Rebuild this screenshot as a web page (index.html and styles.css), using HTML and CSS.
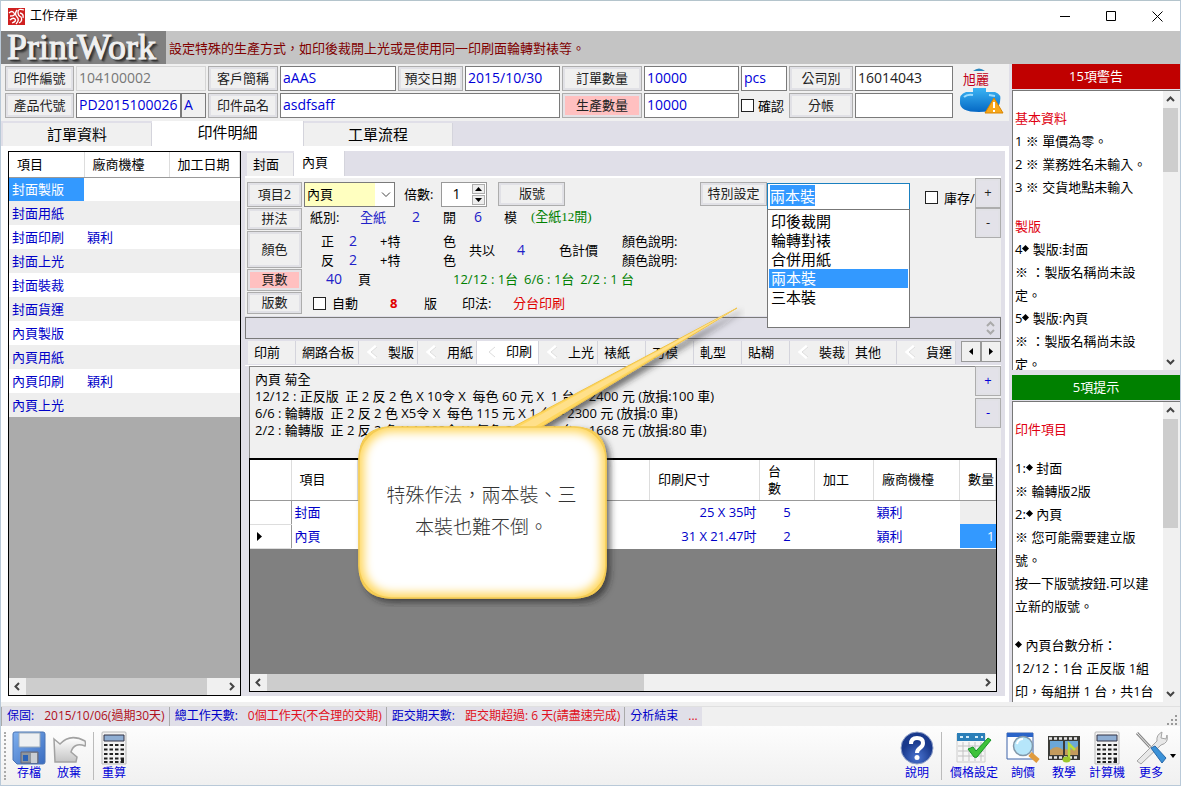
FILE: index.html
```html
<!DOCTYPE html>
<html lang="zh-Hant">
<head>
<meta charset="utf-8">
<meta name="viewport" content="width=device-width, initial-scale=1">
<title>工作存單</title>
<link rel="stylesheet" href="styles.css">
</head>
<body>
<div class="window">
  <header class="titlebar">
    <svg class="app-icon" viewBox="0 0 17 17" aria-hidden="true"><rect width="17" height="17" fill="#cf2020"/><path d="M1 5q3-3 5 0t-4 3M2 12q3-3 5-1t-3 4M16 2q-6-2-6 2t3 5q2 4-2 6M9 2q-3 4 0 7t-1 7M12 5q4 1 3 5" fill="none" stroke="#fff" stroke-width="1.3"/></svg>
    <h1 class="title">工作存單</h1>
    <div class="window-buttons">
      <button aria-label="最小化"><svg viewBox="0 0 11 11"><path d="M0 5.5h10"/></svg></button>
      <button aria-label="最大化"><svg viewBox="0 0 11 11"><path d="M.5.5h9v9h-9z"/></svg></button>
      <button aria-label="關閉"><svg viewBox="0 0 11 11"><path d="M.5.5l10 10M10.500.5l-10 10"/></svg></button>
    </div>
  </header>
  <div class="banner"><div class="logo">PrintWork</div><p class="hint">設定特殊的生產方式，如印後裁開上光或是使用同一印刷面輪轉對裱等。</p></div>

  <main class="main">
    <div class="left">
      <form class="form">
        <button type="button" class="btn">印件編號</button>
        <input class="field muted" aria-label="印件編號" value="104100002">
        <button type="button" class="btn">客戶簡稱</button>
        <input class="field" aria-label="客戶簡稱" value="aAAS">
        <button type="button" class="btn">預交日期</button>
        <input class="field" aria-label="預交日期" value="2015/10/30">
        <button type="button" class="btn">訂單數量</button>
        <input class="field" aria-label="訂單數量" value="10000">
        <input class="field" aria-label="單位" value="pcs">
        <button type="button" class="btn">公司別</button>
        <input class="field dark" aria-label="公司別" value="16014043">
        <div class="customer">
          <span class="customer-name">旭麗</span>
          <svg viewBox="0 0 46 50" aria-hidden="true">
            <defs><linearGradient id="blue" x2="0" y2="1"><stop stop-color="#3bb4f4"/><stop offset="1" stop-color="#0568c4"/></linearGradient></defs>
            <path d="M14 5q6-5 12 0z" fill="#2b87bd"/><path d="M14 22h13v4h9q7 2 5 10-1 10-21 10T1 36q-1-8 6-10h7z" fill="url(#blue)"/><path d="M5 31q3-3 9-2M30 29l6 1" stroke="#9bdcff" stroke-width="2" fill="none"/><path d="M35 32l9 15H26z" fill="#f7a81b" stroke="#d98500"/><path d="M35 36v6M35 44v2" stroke="#fff" stroke-width="2"/>
          </svg>
        </div>
        <button type="button" class="btn">產品代號</button>
        <div class="code"><input class="field" aria-label="產品代號" value="PD2015100026"><input class="field tint" aria-label="版本" value="A"></div>
        <button type="button" class="btn">印件品名</button>
        <input class="field wide" aria-label="印件品名" value="asdfsaff">
        <button type="button" class="btn pink">生產數量</button>
        <input class="field" aria-label="生產數量" value="10000">
        <label class="check"><input type="checkbox">確認</label>
        <button type="button" class="btn">分帳</button>
        <input class="field" aria-label="分帳">
      </form>
      <nav class="tabs">
        <button class="tab">訂單資料</button><button class="tab active">印件明細</button><button class="tab">工單流程</button>
      </nav>
      <div class="body">
        <section class="items">
          <table class="item-table">
            <colgroup><col class="c-name"><col class="c-vendor"><col></colgroup>
            <thead><tr><th>項目</th><th>廠商機檯</th><th>加工日期</th></tr></thead>
            <tbody>
              <tr><td class="selected">封面製版</td><td></td><td></td></tr>
              <tr><td>封面用紙</td><td></td><td></td></tr>
              <tr><td>封面印刷</td><td>穎利</td><td></td></tr>
              <tr><td>封面上光</td><td></td><td></td></tr>
              <tr><td>封面裝裁</td><td></td><td></td></tr>
              <tr><td>封面貨運</td><td></td><td></td></tr>
              <tr><td>內頁製版</td><td></td><td></td></tr>
              <tr><td>內頁用紙</td><td></td><td></td></tr>
              <tr><td>內頁印刷</td><td>穎利</td><td></td></tr>
              <tr><td>內頁上光</td><td></td><td></td></tr>
            </tbody>
          </table>
          <div class="hbar"><button aria-label="向左"><svg viewBox="0 0 9 9"><path d="M6 1L2.500 4.500 6 8"/></svg></button><span class="track"><i class="thumb thumb-items"></i></span><button aria-label="向右"><svg viewBox="0 0 9 9"><path d="M3 1l3.500 3.500L3 8"/></svg></button></div>
        </section>

        <section class="detail">
          <nav class="subtabs"><button class="tab">封面</button><button class="tab active">內頁</button></nav>
          <div class="spec">
            <div class="rows">
              <div class="row r1">
                <button class="btn">項目2</button>
                <div class="pick"><select aria-label="項目"><option>內頁</option></select><svg viewBox="0 0 10 6" aria-hidden="true"><path d="M1 .500l4 4 4-4"/></svg></div>
                <label class="times" for="times">倍數:</label>
                <div class="spin"><input id="times" value="1"><span><button aria-label="增加"><svg viewBox="0 0 7 4"><path d="M3.500 0L7 4H0z"/></svg></button><button aria-label="減少"><svg viewBox="0 0 7 4"><path d="M0 0h7L3.500 4z"/></svg></button></span></div>
                <button class="btn plate">版號</button>
                <button class="btn special">特別設定</button>
                <div class="combo">
                  <input id="special" aria-label="特別設定" value="兩本裝" autofocus>
                  <ul class="options" role="listbox"><li role="option">印後裁開</li><li role="option">輪轉對裱</li><li role="option">合併用紙</li><li role="option" class="on" aria-selected="true">兩本裝</li><li role="option">三本裝</li></ul>
                </div>
                <label class="check stock"><input type="checkbox">庫存/</label>
              </div>
              <div class="row r2"><button class="btn">拼法</button><div class="cells"><span>紙別:</span><b>全紙</b><b class="num">2</b><span>開</span><b class="num">6</b><span>模</span><span class="green serif">(全紙12開)</span></div></div>
              <div class="row r3"><button class="btn">顏色</button><div class="cells"><span>正</span><b class="num">2</b><span>+特</span><span>色</span><span class="two">共以</span><b class="two num">4</b><span class="two">色計價</span><span>顏色說明:</span><span>反</span><b class="num">2</b><span>+特</span><span>色</span><span>顏色說明:</span></div></div>
              <div class="row r4"><button class="btn pink">頁數</button><div class="cells"><b class="num">40</b><span>頁</span><span class="green sizes"><span>12/12 : 1台</span><span>6/6 : 1台</span><span>2/2 : 1 台</span></span></div></div>
              <div class="row r5"><button class="btn">版數</button><div class="cells"><label class="check"><input type="checkbox">自動</label><strong class="red">8</strong><span>版</span><span>印法:</span><span class="red">分台印刷</span></div></div>
            </div>
            <div class="plusminus"><button class="btn" aria-label="新增">+</button><button class="btn" aria-label="移除">-</button></div>
          </div>
          <div class="note"><svg viewBox="0 0 9 14" aria-hidden="true"><path d="M1 5l3.500-3.500L8 5M1 9l3.500 3.500L8 9"/></svg></div>
          <nav class="steps">
            <button class="tab">印前</button><button class="tab wide-tab">網路合板</button><button class="tab mark">製版</button><button class="tab mark">用紙</button><button class="tab mark active">印刷</button><button class="tab mark">上光</button><button class="tab">裱紙</button><button class="tab">刀模</button><button class="tab">軋型</button><button class="tab">貼糊</button><button class="tab mark">裝裁</button><button class="tab">其他</button><button class="tab mark">貨運</button>
            <span class="pager"><button aria-label="上一頁籤"><svg viewBox="0 0 4 7"><path d="M4 0v7L0 3.500z"/></svg></button><button aria-label="下一頁籤"><svg viewBox="0 0 4 7"><path d="M0 0v7l4-3.500z"/></svg></button></span>
          </nav>
          <div class="calc">
            <div class="calc-text">內頁 菊全
12/12 : 正反版  正 2 反 2 色 X 10令 X  每色 60 元 X  1 台 = 2400 元 (放損:100 車)
6/6 : 輪轉版  正 2 反 2 色 X5令 X  每色 115 元 X 1 台 = 2300 元 (放損:0 車)
2/2 : 輪轉版  正 2 反 2 色 X 1.668令 X  每色 25 元 X 1 台 = 1668 元 (放損:80 車)</div>
            <div class="plusminus blue"><button class="btn" aria-label="新增印刷">+</button><button class="btn" aria-label="移除印刷">-</button></div>
          </div>
          <div class="grid">
            <table class="grid-table">
              <colgroup><col class="g-mark"><col class="g-item"><col><col class="g-size"><col class="g-count"><col class="g-work"><col class="g-vendor"><col class="g-qty"></colgroup>
              <thead><tr><th></th><th>項目</th><th></th><th>印刷尺寸</th><th>台<br>數</th><th>加工</th><th>廠商機檯</th><th>數量</th></tr></thead>
              <tbody>
                <tr><td></td><td>封面</td><td></td><td class="right">25 X 35吋</td><td class="center">5</td><td></td><td>穎利</td><td class="shade"></td></tr>
                <tr><td class="pointer"><svg viewBox="0 0 5 9" aria-hidden="true"><path d="M0 0l5 4.500L0 9z"/></svg></td><td>內頁</td><td></td><td class="right">31 X 21.47吋</td><td class="center">2</td><td></td><td>穎利</td><td class="selected right">1</td></tr>
              </tbody>
            </table>
            <div class="hbar"><button aria-label="向左"><svg viewBox="0 0 9 9"><path d="M6 1L2.500 4.500 6 8"/></svg></button><span class="track"><i class="thumb thumb-grid"></i></span><button aria-label="向右"><svg viewBox="0 0 9 9"><path d="M3 1l3.500 3.500L3 8"/></svg></button></div>
          </div>
        </section>
      </div>
    </div>

    <aside class="side">
      <h2 class="warn">15項警告</h2>
      <div class="pane pane-a">
        <div class="msgs">
          <p class="head">基本資料</p><p>1 ※ 單價為零。</p><p>2 ※ 業務姓名未輸入。</p><p>3 ※ 交貨地點未輸入</p>
          <p class="head">製版</p><p>4<i class="dia"></i> 製版:封面</p><p>※ ：製版名稱尚未設<br>定。</p><p>5<i class="dia"></i> 製版:內頁</p><p>※ ：製版名稱尚未設<br>定。</p>
        </div>
        <div class="vbar"><button aria-label="向上"><svg viewBox="0 0 9 9"><path d="M1 6l3.500-3.500L8 6"/></svg></button><span class="track"><i class="thumb thumb-a"></i></span><button aria-label="向下"><svg viewBox="0 0 9 9"><path d="M1 3l3.500 3.500L8 3"/></svg></button></div>
      </div>
      <h2 class="tips">5項提示</h2>
      <div class="pane pane-b">
        <div class="msgs">
          <p class="head">印件項目</p><p class="gap">1:<i class="dia"></i> 封面</p><p>※ 輪轉版2版</p><p>2:<i class="dia"></i> 內頁</p><p>※ 您可能需要建立版<br>號。</p><p>按一下版號按鈕.可以建<br>立新的版號。</p>
          <p class="gap"><i class="dia"></i> 內頁台數分析：</p><p>12/12：1台 正反版 1組<br>印，每組拼 1 台，共1台</p>
        </div>
        <div class="vbar"><button aria-label="向上"><svg viewBox="0 0 9 9"><path d="M1 6l3.500-3.500L8 6"/></svg></button><span class="track"><i class="thumb thumb-b"></i></span><button aria-label="向下"><svg viewBox="0 0 9 9"><path d="M1 3l3.500 3.500L8 3"/></svg></button></div>
      </div>
    </aside>
  </main>

  <footer class="status">
    <div class="status-items">
      <p><span class="key">保固:</span><span class="maroon">2015/10/06(過期30天)</span></p>
      <p><span class="key">總工作天數:</span><span class="crimson">0個工作天(不合理的交期)</span></p>
      <p><span class="key">距交期天數:</span><span class="crimson">距交期超過: 6 天(請盡速完成)</span></p>
      <p><span class="key">分析結束</span><span class="crimson">...</span></p>
    </div>
    <svg class="grip" viewBox="0 0 11 11" aria-hidden="true"><path d="M8 0h2v2H8zM4 4h2v2H4zM8 4h2v2H8zM0 8h2v2H0zM4 8h2v2H4zM8 8h2v2H8z" fill="#999"/></svg>
  </footer>

  <nav class="toolbar">
    <i class="handle"></i>
    <button class="tool"><svg viewBox="0 0 34 34" aria-hidden="true"><defs><linearGradient id="disk" x2="1" y2="1"><stop stop-color="#7fb0ee"/><stop offset="1" stop-color="#3a6cc0"/></linearGradient><linearGradient id="silver" x2="0" y2="1"><stop stop-color="#fff"/><stop offset="1" stop-color="#c4c4c4"/></linearGradient></defs><path d="M3 1h28q2 0 2 2v28q0 2-2 2H5l-4-4V3q0-2 2-2z" fill="url(#disk)" stroke="#4a74b4"/><path d="M7 2h21v14H7z" fill="#eef0f2" stroke="#9ab"/><path d="M9 21h17v11H9z" fill="#8e969e" stroke="#667"/><path d="M19 22h6v10h-6z" fill="#c9ced3"/><path d="M11 24h5v6h-5z" fill="#2a63b8"/></svg><span>存檔</span></button>
    <button class="tool"><svg viewBox="0 0 34 34" aria-hidden="true"><path d="M2 8l6 5Q18 2 33 10q1 3 0 5-11-4-14 6l6 5-1 5H3z" fill="url(#silver)" stroke="#a2a2a2" stroke-width="1.500"/></svg><span>放棄</span></button>
    <i class="sep"></i>
    <button class="tool"><svg viewBox="0 0 34 34" aria-hidden="true"><use href="#calculator"/></svg><span>重算</span></button>
    <button class="tool help"><svg viewBox="0 0 34 34" aria-hidden="true"><defs><radialGradient id="ball" cy=".8"><stop stop-color="#4a74d0"/><stop offset="1" stop-color="#19398c"/></radialGradient></defs><circle cx="17" cy="17" r="16" fill="url(#ball)" stroke="#8fa0c8"/><path d="M11 13q0-6 6-6t6 5q0 3-3 5t-3 5" fill="none" stroke="#fff" stroke-width="4"/><circle cx="17" cy="26.500" r="2.500" fill="#fff"/></svg><span>說明</span></button>
    <i class="sep"></i>
    <button class="tool price"><svg viewBox="0 0 38 34" aria-hidden="true"><path d="M2 3h28v28H2z" fill="#f6f6f6" stroke="#ccc"/><path d="M2 2h28v8H2z" fill="#2b7fb8"/><path d="M5 6h3M11 6h3M20 6h3M26 6h2" stroke="#d3ecfa" stroke-width="2"/><path d="M3 15h26M3 20h26M3 25h26M8 11v19M14 11v19M20 11v19M26 11v19" stroke="#c2c2c2"/><path d="M13 18l5-2 3 4L33 7l3 2-14 17q-1 1-3 0z" fill="#3ec23a" stroke="#159426"/></svg><span>價格設定</span></button>
    <button class="tool ask"><svg viewBox="0 0 34 34" aria-hidden="true"><path d="M1 2h26v26H1z" fill="#fcfdff" stroke="#3d63a8"/><path d="M1 2h26v4H1z" fill="#2a64c8"/><path d="M24 23l8 7" stroke="#e09a3c" stroke-width="5"/><circle cx="17" cy="15" r="9.500" fill="#b6e6fa" stroke="#8298aa" stroke-width="1.500"/><path d="M11 13q1-5 6-5" stroke="#fff" stroke-width="2" fill="none"/></svg><span>詢價</span></button>
    <button class="tool teach"><svg viewBox="0 0 34 34" aria-hidden="true"><path d="M1 5h32v24H1z" fill="#3b3b37"/><path d="M3 10h13v14H3zM18 10h13v14H18z" fill="#6ba7d8"/><path d="M3 19q7-6 13 0v5H3zM18 18q7 2 13-3v9H18z" fill="#c49b5c"/><path d="M2 7.500h30M2 26.500h30" stroke="#e8e8e8" stroke-width="2.500" stroke-dasharray="3 2"/><path d="M22 28V13l6 6" fill="none" stroke="#b6dc3c" stroke-width="2.500"/><ellipse cx="19.500" cy="28.500" rx="4" ry="3" fill="#9cc82c"/></svg><span>教學</span></button>
    <button class="tool calc2"><svg viewBox="0 0 34 34" aria-hidden="true"><g id="calculator"><path d="M6 1h22q1 0 1 1v31H5V2q0-1 1-1z" fill="#f2f2f2" stroke="#b9b9b9"/><path d="M7 4h20v6H7z" fill="#8faed3" stroke="#334"/><path d="M7 14h20M7 18.500h20M7 23h20M7 27.500h20M7 31h20" stroke="#222" stroke-width="2.200" stroke-dasharray="3.500 2"/><path d="M24 27h3v5h-3z" fill="#222"/></g></svg><span>計算機</span></button>
    <button class="tool more"><svg viewBox="0 0 34 34" aria-hidden="true"><path d="M3 30L23 10q-1-6 5-9l-1 6 5 1 1-4q2 8-6 10L7 33z" fill="#e8e8e8" stroke="#a4a4a4"/><path d="M3 2l13 14" stroke="#888" stroke-width="3"/><path d="M3 2l13 14" stroke="#eee"/><path d="M17 17l4-2 11 12-4 5z" fill="#3b92d8" stroke="#2868a8"/></svg><span>更多</span></button>
    <svg class="caret" viewBox="0 0 6 4" aria-hidden="true"><path d="M0 0h6L3 4z"/></svg>
  </nav>

  <div class="callout" role="note">
    <svg viewBox="0 0 396 306" aria-hidden="true">
      <defs>
        <filter id="shadow" x="-10%" y="-10%" width="125%" height="125%"><feDropShadow dx="4" dy="4" stdDeviation="3" flood-color="#222" flood-opacity=".65"/></filter>
        <filter id="soft" x="-20%" y="-20%" width="140%" height="140%"><feGaussianBlur stdDeviation="5"/></filter>
        <clipPath id="bubble"><rect x="10" y="126" width="247" height="171" rx="32"/></clipPath>
      </defs>
      <g filter="url(#shadow)">
        <path d="M42 126H164L388 7 192 126h33q32 0 32 32v107q0 32-32 32H42q-32 0-32-32V158q0-32 32-32z" fill="#ffd75e" stroke="#f0c44a"/>
      </g>
      <path d="M169 126L388 7 185 126z" fill="#ffe08a"/>
      <g clip-path="url(#bubble)"><rect x="10" y="126" width="247" height="171" rx="32" fill="#ffd75e"/><rect x="15" y="131" width="237" height="161" rx="28" fill="#fff" filter="url(#soft)"/></g>
      <rect x="10" y="126" width="247" height="171" rx="32" fill="none" stroke="#f3cb55" stroke-width="1.500"/>
    </svg>
    <p>特殊作法，兩本裝、三<br>本裝也難不倒。</p>
  </div>
</div>
<script src="app.js"></script>
</body>
</html>
```
FILE: app.js
```js
var special = document.getElementById('special');
special.focus();
special.select();
```
FILE: styles.css
```css
* { box-sizing: border-box; }
body, h1, h2, p, ul { margin: 0; padding: 0; }
body, button, input, select { font-family: "Open Sans", "Noto Sans CJK TC", sans-serif; font-size: 13px; line-height: 18px; }
h1, h2, th, b { font-weight: 400; }
button { padding: 0; border: 0; background: none; color: inherit; white-space: nowrap; }
svg { display: block; }

.window { position: relative; display: flex; flex-direction: column; height: 100vh; min-height: 700px; overflow: hidden; border: 1px solid #b9c9d8; border-top-color: #b4c4cc; background: #f0f0f0; color: #000; }
.titlebar { display: flex; align-items: center; flex: none; height: 30px; padding-left: 7px; background: #fff; }
.app-icon { width: 17px; height: 17px; }
.title { margin-left: 5px; font-size: 12px; }
.window-buttons { display: flex; margin-left: auto; }
.window-buttons button { display: grid; place-items: center; width: 46px; height: 28px; }
.window-buttons svg { width: 11px; height: 11px; fill: none; stroke: #000; }
.banner { display: flex; align-items: center; flex: none; height: 33px; background: #c4c4c4; }
.logo { width: 165px; height: 33px; padding-left: 6px; background: #808080; color: #f0f0f0; font: 36px/32px "Liberation Serif", serif; -webkit-text-stroke: 1px #f0f0f0; text-shadow: 2px 2px 1px #333, 3px 3px 2px #444; }
.hint { margin-left: 3px; color: #800000; white-space: nowrap; }

.main { display: flex; flex: 1; min-height: 0; margin-bottom: 4px; background: #e0dfe8; }
.left { display: flex; flex-direction: column; flex: 1; min-width: 0; }
.form { display: grid; grid-template-columns: 69px minmax(0, 130fr) 70px minmax(0, 116fr) 65px minmax(0, 95fr) 80px minmax(0, 95fr) 46px 64px minmax(0, 98fr) 50px; grid-template-rows: 25px 25px; gap: 2px; padding: 2px 4px 3px; background: #f0f0f0; }
.btn { padding-bottom: 2px; border: 1px solid #adadad; background: #f0f0f0; box-shadow: inset 0 0 0 2px #e1e1e6; color: #222; }
.btn.pink { background: #ffc0c0; box-shadow: inset 0 0 0 2px #e4e2e6; }
.field { min-width: 0; width: 100%; height: 25px; padding: 0 0 2px 2px; border: 1px solid #7a7a7a; border-radius: 0; background: #fff; color: #0000d8; font-size: 14px; }
.field.muted { border-color: #d5d5d5; background: #f0f0f0; color: #777; }
.field.dark { color: #222; }
.field.tint { background: #f0f0f0; }
.field.wide { grid-column: span 3; }
.code { display: grid; grid-template-columns: minmax(0, 1fr) 25px; }
.check { display: flex; align-items: center; gap: 6px; white-space: nowrap; }
.check input { appearance: none; flex: none; width: 13px; height: 13px; margin: 0; border: 1px solid #222; background: #fff; }
.form .check { gap: 4px; }
.customer { position: relative; grid-row: span 2; padding-left: 4px; }
.customer svg { width: 46px; height: 50px; }
.customer-name { position: absolute; left: 8px; top: 4px; color: #c00020; }

.tabs, .subtabs, .steps { display: flex; align-items: flex-end; flex: none; background: #e0dfe8; }
.tab { padding-bottom: 2px; border-right: 1px solid #d4d4dc; background: #f0f0f0; }
.tab.active { background: #fff; }
.tabs { height: 25px; padding-left: 2px; }
.tabs .tab { width: 149px; height: 23px; font-size: 15px; }
.tabs .active { width: 152px; height: 25px; padding-bottom: 3px; }
.body { display: flex; flex: 1; min-height: 0; padding: 5px 3px 6px 7px; background: #fff; }

.items { display: flex; flex-direction: column; flex: none; width: 233px; border: 1px solid #000; background: #ababab; }
table { width: 100%; border-collapse: collapse; table-layout: fixed; background: #fff; }
th { border-right: 1px solid #ddd; border-bottom: 1px solid #999; text-align: left; padding: 0 0 0 8px; white-space: nowrap; }
td { height: 24px; padding: 0 3px; color: #0000c8; white-space: nowrap; }
.item-table th { height: 25px; }
.item-table .c-name { width: 75px; }
.item-table .c-vendor { width: 85px; }
.item-table tr:nth-child(even) td { background: #eee; }
td.selected { background: #3399ff !important; color: #fff; }
.hbar { display: flex; flex: none; height: 17px; margin-top: auto; background: #f0f0f0; }
.hbar button, .vbar button { display: grid; place-items: center; flex: none; width: 17px; height: 17px; }
.hbar svg, .vbar svg { width: 9px; height: 9px; fill: none; stroke: #444; stroke-width: 2; }
.track { flex: 1; }
.thumb { display: block; height: 100%; background: #cdcdcd; }
.thumb-items { width: 92%; }
.thumb-grid { width: 53%; }

.detail { display: flex; flex-direction: column; flex: 1; min-width: 0; padding: 0 4px 4px; border-right: 1px solid #fff; background: #e0dfe8; }
.subtabs { height: 25px; padding-left: 2px; }
.subtabs .tab { width: 47px; height: 23px; padding-right: 8px; }
.subtabs .active { width: 51px; height: 25px; padding: 0 8px 3px 0; }
.spec { display: flex; flex: none; border-top: 2px solid #fff; background: #f0f0f0; }
.rows { display: flex; flex-direction: column; flex: 1; gap: 1px; min-width: 0; padding: 4px 0 2px 2px; }
.row { display: flex; }
.row > .btn:first-child { flex: none; width: 55px; }
.cells { display: grid; align-items: center; flex: 1; white-space: nowrap; }
.cells b { color: #2020c8; }
.num { font-size: 14px; }
.green { color: #008000; }
.red { color: #e00000; }
.serif { font-family: "Liberation Serif", "Noto Sans CJK TC", serif; }
.r1 { height: 25px; }
.pick { position: relative; flex: none; width: 91px; margin-left: 2px; }
.pick select { appearance: none; width: 100%; height: 25px; padding: 0 0 2px 2px; border: 1px solid #7a7a7a; border-radius: 0; background: linear-gradient(90deg, #ffffc0 70px, #fff 70px); }
.pick svg { position: absolute; right: 4px; top: 10px; width: 10px; height: 6px; fill: none; stroke: #444; }
.times { padding: 3px 8px 0 9px; }
.spin { display: flex; flex: none; width: 46px; height: 25px; border: 1px solid #999; background: #fff; }
.spin input { flex: 1; min-width: 0; padding: 0 0 2px 10px; border: 0; background: none; font-size: 14px; }
.spin span { display: grid; gap: 1px; width: 15px; padding: 1px; }
.spin button { display: grid; place-items: center; border: 1px solid #adadad; background: #eee; }
.spin svg { width: 7px; height: 4px; }
.plate { flex: none; width: 67px; margin: 0 0 1px 11px; }
.special { flex: none; width: 67px; margin: 0 0 1px auto; }
.combo { position: relative; flex: none; width: 143px; height: 28px; margin-top: 1px; }
.combo input { width: 100%; height: 27px; padding: 0 2px 2px; border: 1px solid #1a80c0; outline: 0; font-size: 15px; }
.combo input::selection { background: #3399ff; color: #fff; }
.options { position: absolute; z-index: 2; top: 26px; left: 0; width: 100%; height: 119px; padding: 2px 1px; border: 1px solid #777; background: #fff; list-style: none; font-size: 15px; line-height: 19px; }
.options li { padding-left: 2px; }
.options .on { background: #3399ff; color: #fff; }
.stock { flex: none; width: 50px; margin-left: 15px; padding-top: 6px; overflow: hidden; }
.r2, .r4, .r5 { height: 22px; }
.r3 { height: 37px; }
.r2 .cells { grid-template-columns: 50px 52px 31px 31px 30px 27px 1fr; padding: 0 0 4px 8px; }
.r3 .cells { grid-template-columns: 28px 31px 63px 26px 48px 42px 63px 1fr; grid-auto-rows: 19px; padding-left: 19px; }
.two { grid-row: 1 / span 2; }
.r3 .two:nth-child(5) { grid-column: 5; }
.r3 .two:nth-child(6) { grid-column: 6; }
.r3 .two:nth-child(7) { grid-column: 7; }
.r4 .cells { grid-template-columns: 32px 95px 1fr; padding: 0 0 2px 24px; }
.sizes { display: flex; gap: 6px; }
.r5 .cells { grid-template-columns: 77px 34px 38px 51px 1fr; padding-left: 11px; }
.plusminus { display: flex; flex-direction: column; flex: none; width: 26px; }
.plusminus .btn { height: 30px; background: #e3e2e9; }
.plusminus.blue { gap: 2px; }
.plusminus.blue .btn { color: #0000d8; }
.note { display: flex; justify-content: flex-end; align-items: center; flex: none; height: 22px; margin: 1px 0 0; padding-right: 5px; border: 1px solid #7a7a7a; }
.note svg { width: 9px; height: 14px; fill: none; stroke: #aaa; stroke-width: 2; }
.steps { height: 25px; margin-top: 2px; padding: 0 0 1px 3px; align-items: stretch; border-bottom: 1px solid #fff; }
.steps .tab { flex: 0 0 48px; padding-left: 6px; text-align: left; }
.steps .wide-tab { flex-basis: 63px; }
.steps .mark { flex-basis: 59px; padding-left: 29px; background: #f0f0f0 url("data:image/svg+xml,%3Csvg xmlns='http://www.w3.org/2000/svg' width='12' height='14'%3E%3Cpath d='M10 1L3 7l7 6' fill='none' stroke='%23fff' stroke-width='3'/%3E%3Cpath d='M11 2L5 7l6 5' fill='none' stroke='%23ddd'/%3E%3C/svg%3E") no-repeat 7px 4px; }
.steps .tab.active { flex-basis: 62px; padding-bottom: 4px; background-color: #fff; }
.pager { display: flex; margin-left: auto; margin-bottom: 2px; }
.pager button { display: grid; place-items: center; width: 20px; border: 1px solid #999; background: #f0f0f0; }
.pager svg { width: 4px; height: 7px; }
.calc { display: flex; flex: none; margin-left: 4px; background: #f0f0f0; }
.calc-text { flex: 1; min-width: 0; min-height: 92px; padding: 4px 4px 0 5px; overflow: hidden; border: 1px solid #888; border-width: 1px 0 0 1px; white-space: pre; line-height: 17px; }
.grid { display: flex; flex-direction: column; flex: 1; min-height: 0; margin: 0 4px; border: 1px solid #000; border-top-width: 2px; background: #808080; }
.grid-table .g-mark { width: 41px; }
.grid-table .g-item { width: 66px; }
.grid-table .g-size { width: 110px; }
.grid-table .g-count { width: 55px; }
.grid-table .g-work { width: 59px; }
.grid-table .g-vendor { width: 86px; }
.grid-table .g-qty { width: 36px; }
.grid-table th { height: 40px; line-height: 17px; }
.grid-table td:first-child { border-right: 1px solid #999; border-bottom: 1px solid #ddd; }
.right { text-align: right; }
.center { text-align: center; }
.shade { background: #eee; }
.grid-table .selected { padding-right: 1px; }
.pointer svg { width: 5px; height: 9px; margin-left: 4px; }

.side { display: flex; flex-direction: column; flex: none; width: 168px; margin-left: 3px; }
.side h2 { flex: none; height: 25px; color: #fff; font-size: 13px; line-height: 24px; text-align: center; }
.warn { background: #c00000; }
.tips { margin-top: 5px; background: #008000; }
.pane { display: flex; min-height: 0; margin-top: 1px; border: 1px solid #777; border-width: 1px 0 0 1px; background: #fff; overflow: hidden; }
.pane-a { flex: 280 0 0; }
.pane-b { flex: 301 0 0; }
.msgs { flex: 1; min-width: 0; padding-left: 2px; white-space: nowrap; line-height: 23px; }
.head { padding-top: 16px; color: #e00010; }
.gap { padding-top: 16px; }
.dia { display: inline-block; width: 5px; height: 5px; margin: 0 1px 3px; background: #000; transform: rotate(45deg); }
.vbar { display: flex; flex-direction: column; flex: none; width: 17px; padding-right: 2px; background: #f0f0f0; }
.vbar button { width: 15px; }
.thumb-a { height: 26%; }
.thumb-b { height: 41%; }

.status { display: flex; align-items: center; justify-content: space-between; flex: none; height: 20px; border-top: 1px solid #e0e0e0; }
.status-items { display: flex; height: 19px; background: #e0dfe8; font-size: 12px; }
.status p { display: flex; gap: 10px; padding: 0 4px 0 5px; border-left: 1px solid #aaa; white-space: nowrap; }
.key { color: #0000c8; }
.maroon { color: #b01020; }
.crimson { color: #e01020; }
.grip { width: 11px; height: 11px; margin-right: 2px; align-self: flex-end; }
.toolbar { display: flex; align-items: center; flex: none; height: 59px; padding: 0 4px 0 3px; background: linear-gradient(#fdfdfd, #f0f0f0); color: #0000d8; }
.handle { width: 2px; height: 48px; margin-right: 3px; border-left: 2px dotted #aaa; }
.sep { width: 1px; height: 48px; margin-left: 4px; background: #bbb; }
.tool { display: flex; flex-direction: column; align-items: center; flex: none; width: 40px; font-size: 12px; line-height: 16px; }
.tool svg { width: 34px; height: 34px; }
.tool.help { margin-left: auto; }
.tool.price { width: 52px; margin-left: 6px; }
.tool.price svg { width: 38px; }
.tool.ask { width: 46px; }
.tool.teach { width: 36px; }
.tool.calc2 { width: 50px; }
.tool.more { width: 38px; }
.caret { width: 6px; height: 4px; }

.callout { position: absolute; z-index: 3; left: 348px; top: 300px; width: 396px; height: 306px; pointer-events: none; }
.callout svg { width: 396px; height: 306px; }
.callout p { position: absolute; left: 9px; top: 178px; width: 247px; text-align: center; font-size: 19px; font-weight: 300; line-height: 32px; color: #333; }
```
